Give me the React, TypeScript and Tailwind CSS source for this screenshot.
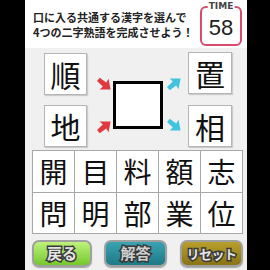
import React from "react";

const Arrow = ({ color, angle }: { color: string; angle: number }) => (
  <svg width="17" height="17" viewBox="0 0 16 16">
    <polygon
      points="0.5,6 8,5.5 7.5,1.5 15.5,8 7.5,14.5 8,10.5 0.5,10"
      fill={color}
      transform={`rotate(${angle} 8 8)`}
    />
  </svg>
);

const SideBox = ({ ch, w }: { ch: string; w: string }) => (
  <div
    className={`${w} h-[42px] bg-white border border-[#b5b5b5] shadow-[1px_1px_1px_rgba(0,0,0,0.15)] flex items-center justify-center text-[30px] leading-none text-[#111]`}
  >
    {ch}
  </div>
);

const grid = ["開", "目", "料", "額", "志", "問", "明", "部", "業", "位"];

export default function App() {
  return (
    <div className="w-[270px] h-[270px] bg-black flex font-['Noto_Sans_CJK_JP',sans-serif] overflow-hidden">
      <div className="ml-[25px] w-[222px] h-full flex flex-col bg-[#f0f0f0]">
        {/* header */}
        <div className="h-[48px] bg-white flex shrink-0">
          <div className="pl-[8px] pt-[10px] text-[11px] font-bold leading-[15px] text-[#222] whitespace-nowrap">
            <div>口に入る共通する漢字を選んで</div>
            <div>4つの二字熟語を完成させよう！</div>
          </div>
          <div className="ml-auto mr-[5px] mt-[6px] w-[42px] h-[40px] border-2 border-[#d94a6e] rounded-[6px] relative flex items-center justify-center">
            <span className="absolute -top-[7px] left-1/2 -translate-x-1/2 bg-white px-[1px] text-[9px] font-bold leading-[10px] text-[#444] font-['DejaVu_Sans',sans-serif]">
              TIME
            </span>
            <span className="mt-[4px] text-[22px] leading-none text-[#222] font-['Liberation_Sans',sans-serif]">
              58
            </span>
          </div>
        </div>

        {/* puzzle */}
        <div className="h-[102px] shrink-0 flex pl-[19px] pt-[5px]">
          <div className="flex flex-col gap-[10px]">
            <SideBox ch="順" w="w-[43px]" />
            <SideBox ch="地" w="w-[43px]" />
          </div>
          <div className="w-[26px] flex flex-col pl-[9px] pt-[23px] gap-[25px]">
            <Arrow color="#e03a3e" angle={40} />
            <Arrow color="#e03a3e" angle={-40} />
          </div>
          <div className="mt-[28px] w-[50px] h-[48px] border-[3px] border-black bg-white" />
          <div className="w-[25px] flex flex-col pl-[3px] pt-[22px] gap-[25px]">
            <Arrow color="#42c3df" angle={-40} />
            <Arrow color="#42c3df" angle={40} />
          </div>
          <div className="flex flex-col gap-[11px] -mt-[1px]">
            <SideBox ch="置" w="w-[44px]" />
            <SideBox ch="相" w="w-[44px]" />
          </div>
        </div>

        {/* grid */}
        <div className="ml-[7px] w-[211px] h-[84px] grid grid-cols-5 grid-rows-2 border-l border-t border-[#a8a8a8] bg-white shrink-0">
          {grid.map((c) => (
            <div
              key={c}
              className="border-r border-b border-[#a8a8a8] flex items-center justify-center text-[28px] leading-none text-[#111]"
            >
              {c}
            </div>
          ))}
        </div>

        {/* buttons */}
        <div className="flex pl-[7px] mt-[6px] gap-[12px]">
          <button className="w-[60px] h-[27px] rounded-[7px] border-2 border-[#a0a0a0] bg-linear-to-b from-[#bdf27a] to-[#74c828] flex items-center justify-center text-[15px] font-bold text-[#e4e4e4] [-webkit-text-stroke:3px_#3a3a3a] [paint-order:stroke_fill] shadow-[0_1px_1px_rgba(0,0,0,0.3)]">
            戻る
          </button>
          <button className="w-[63px] h-[27px] rounded-[7px] border-2 border-[#a0a0a0] bg-linear-to-b from-[#3aa3b1] to-[#1d7a86] flex items-center justify-center text-[15px] font-bold text-[#d0d0d0] [-webkit-text-stroke:3px_#3a3a3a] [paint-order:stroke_fill] shadow-[0_1px_1px_rgba(0,0,0,0.3)]">
            解答
          </button>
          <button className="w-[63px] h-[27px] ml-[1px] rounded-[7px] border-2 border-[#a0a0a0] bg-linear-to-b from-[#b89f2c] to-[#8a7412] flex items-center justify-center text-[13px] font-bold text-[#e4e4e4] [-webkit-text-stroke:3px_#3a3a3a] [paint-order:stroke_fill] shadow-[0_1px_1px_rgba(0,0,0,0.3)] tracking-[-0.5px]">
            リセット
          </button>
        </div>
      </div>
    </div>
  );
}
